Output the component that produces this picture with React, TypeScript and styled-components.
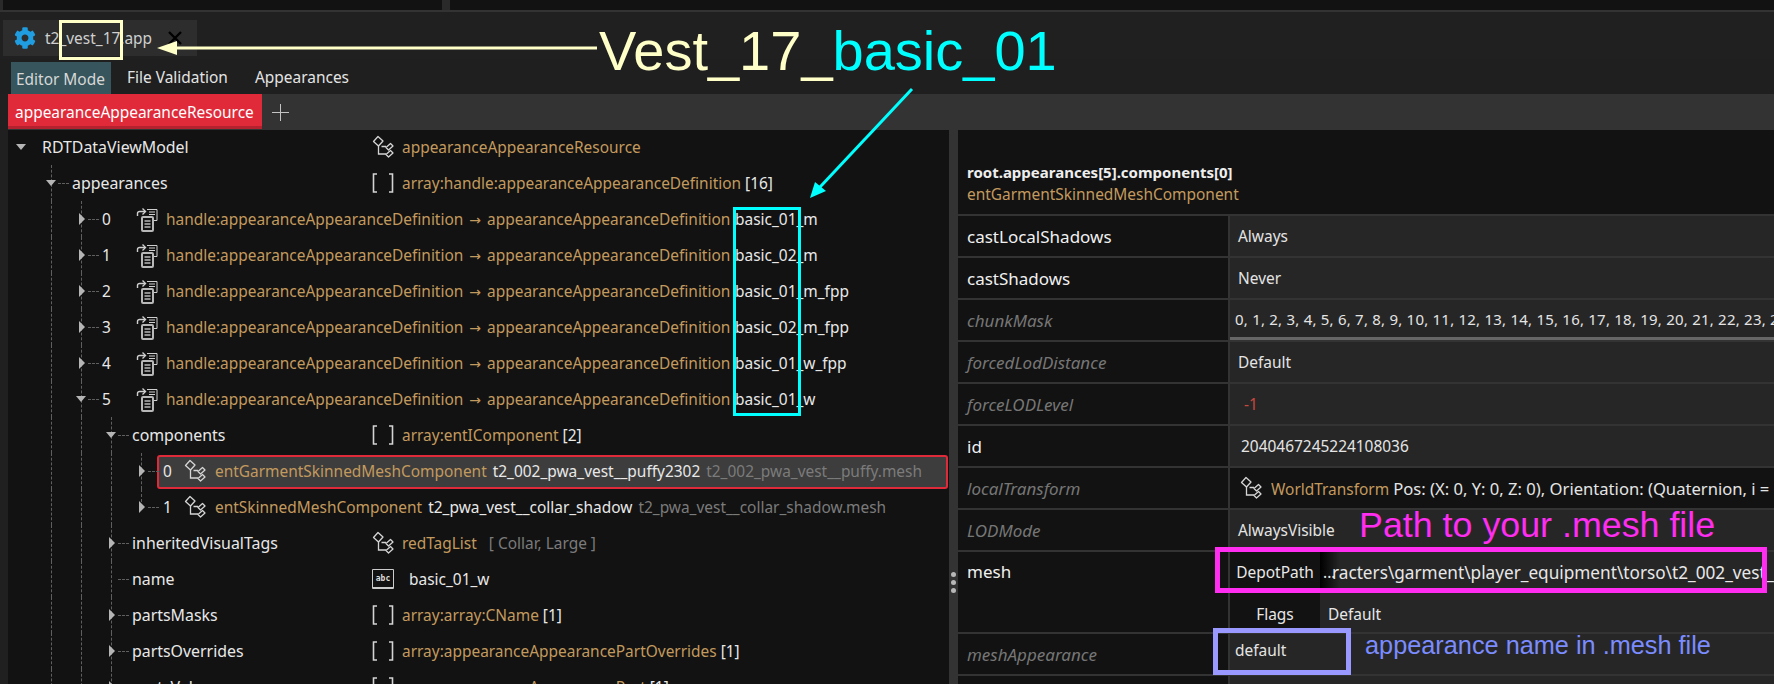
import React from 'react';
import styled, { createGlobalStyle } from 'styled-components';
import { FaCog } from 'react-icons/fa';

const GlobalStyle = createGlobalStyle`
  html, body {
    margin: 0;
    background: #202020;
    overflow: hidden;
  }
  * {
    box-sizing: border-box;
  }
`;

const ORANGE = '#c39a5e';
const YELLOW = '#ffffc8';
const CYAN = '#00ffff';
const PINK = '#ff2df0';
const LAVENDER = '#9999ff';

const Page = styled.div`
  position: relative;
  width: 1774px;
  height: 684px;
  overflow: hidden;
  background: #202020;
  color: #e8e8e8;
  font-family: 'Noto Sans', 'Open Sans', sans-serif;
  font-size: 15.45px;
  white-space: nowrap;
`;

const TopStrip = styled.div`
  display: flex;
  gap: 8px;
  height: 12px;
  padding-left: 3px;
  border-bottom: 2px solid #333;
  background: #2a2a2a;
`;

const TopPane = styled.div<{ $width?: number }>`
  background: #121212;
  flex: ${(p) => (p.$width ? `0 0 ${p.$width}px` : '1')};
`;

const TabBar = styled.div`
  height: 47px;
  padding: 8px 0 3px 3px;
`;

const FileTab = styled.div`
  display: flex;
  align-items: center;
  width: 194px;
  height: 36px;
  padding-left: 11px;
  background: #2d2d2d;
  color: #cfcfcf;
  svg.gear {
    color: #1f9de0;
    flex: none;
  }
`;

const FileName = styled.span`
  margin-left: 9px;
  width: 118px;
`;

const NavBar = styled.div`
  display: flex;
  height: 35px;
  padding: 3px 0 0 11px;
  background: #1f1f1f;
`;

const NavItem = styled.div<{ $active?: boolean; $width: number }>`
  width: ${(p) => p.$width}px;
  padding: ${(p) => (p.$active ? '6px 0 0 5px' : '4px 0 0 16px')};
  background: ${(p) => (p.$active ? '#36555c' : 'transparent')};
  color: ${(p) => (p.$active ? '#d8d8d8' : '#e4e4e4')};
`;

const DocTabs = styled.div`
  display: flex;
  align-items: center;
  height: 36px;
  margin-left: 8px;
  background: #333;
`;

const RedTab = styled.div`
  width: 254px;
  height: 35px;
  align-self: flex-start;
  padding: 7px 0 0 7px;
  background: #e02a3a;
  border-bottom: 3px solid #b3222e;
  color: #fff;
`;

const PlusIcon = styled.svg`
  margin-left: 10px;
  flex: none;
`;

const Main = styled.div`
  display: flex;
  height: 554px;
  padding-left: 8px;
`;

const TreePanel = styled.div`
  width: 941px;
  background: #121212;
  overflow: hidden;
`;

const TreeBody = styled.div`
  margin-top: -1px;
`;

const TreeRowBox = styled.div`
  display: flex;
  align-items: center;
  height: 36px;
  padding-left: 13px;
`;

const GuideCell = styled.div<{ $line?: boolean }>`
  flex: none;
  width: 30px;
  height: 100%;
  border-left: 1px dashed ${(p) => (p.$line ? '#5f5f5f' : 'transparent')};
`;

const Expander = styled.div<{ $line?: boolean; $halfLine?: boolean; $width: number }>`
  position: relative;
  flex: none;
  width: ${(p) => p.$width}px;
  height: 100%;
  &::before {
    content: '';
    position: absolute;
    left: 0;
    top: 0;
    height: ${(p) => (p.$halfLine ? '50%' : '100%')};
    border-left: 1px dashed ${(p) => (p.$line || p.$halfLine ? '#5f5f5f' : 'transparent')};
  }
  &::after {
    content: '';
    position: absolute;
    left: 7px;
    top: 18px;
    width: 11px;
    border-top: 1px dashed ${(p) => (p.$line || p.$halfLine ? '#5f5f5f' : 'transparent')};
  }
`;

const Triangle = styled.span<{ $open?: boolean }>`
  position: absolute;
  z-index: 1;
  width: 0;
  height: 0;
  ${(p) =>
    p.$open
      ? `left: -5px; top: 15px;
         border-left: 5px solid transparent;
         border-right: 5px solid transparent;
         border-top: 6px solid #b5b5b5;`
      : `left: -2px; top: 12px;
         border-top: 6px solid transparent;
         border-bottom: 6px solid transparent;
         border-left: 6px solid #b5b5b5;`}
`;

const KeyLabel = styled.div<{ $depth: number }>`
  flex: none;
  width: ${(p) => 330 - 30 * p.$depth}px;
  color: #e8e8e8;
  font-size: 15.9px;
`;

const IndexLabel = styled.div<{ $width: number }>`
  flex: none;
  width: ${(p) => p.$width}px;
  color: #e8e8e8;
`;

const IconSlot = styled.div<{ $width?: number }>`
  display: flex;
  align-items: center;
  flex: none;
  width: ${(p) => p.$width ?? 30}px;
`;

const Orange = styled.span`
  color: ${ORANGE};
`;

const Muted = styled.span`
  color: #7b7b7b;
`;

const Plain = styled.span`
  color: #e8e8e8;
`;

const HandleText = styled.div`
  flex: none;
  width: 569px;
  color: ${ORANGE};
`;

const ArrowGlyph = styled.span`
  margin: 0 2px;
  font-family: 'DejaVu Sans', sans-serif;
  font-size: 14px;
`;

const SelectedBox = styled.div`
  display: flex;
  align-items: center;
  flex: 1;
  height: 34px;
  margin: 2px 1px 0 0;
  padding-left: 4px;
  border: 2px solid #e02a3a;
  border-radius: 3px;
  background: #3d3d3d;
`;

const SelectedInner = styled.div`
  display: flex;
  align-items: center;
  margin-top: -2px;
`;

const ComponentText = styled.div`
  display: flex;
  gap: 6px;
`;

const TagList = styled.span`
  margin-left: 12px;
  color: #7b7b7b;
`;

const NameValue = styled.span`
  margin-left: 7px;
`;

const AbcIcon = styled.span`
  display: flex;
  align-items: center;
  justify-content: center;
  width: 22px;
  height: 20px;
  border: 1px solid #ccc;
  border-bottom-width: 2px;
  border-radius: 1px;
  color: #ddd;
  font-family: 'DejaVu Sans Mono', monospace;
  font-size: 8px;
  font-weight: 700;
`;

const Splitter = styled.div`
  display: flex;
  flex-direction: column;
  align-items: center;
  justify-content: flex-end;
  gap: 3px;
  flex: none;
  width: 9px;
  height: 463px;
  background: #333;
`;

const SplitterColumn = styled.div`
  flex: none;
  width: 9px;
  background: #333;
`;

const SplitDot = styled.span`
  width: 5px;
  height: 5px;
  border-radius: 50%;
  background: #b8b8b8;
`;

const PropsPanel = styled.div`
  flex: 1;
  min-width: 0;
  background: #121212;
  overflow: hidden;
`;

const PropsHeader = styled.div`
  height: 86px;
  padding: 31px 0 0 9px;
  border-bottom: 2px solid #333;
  line-height: 22px;
`;

const HeaderPath = styled.div`
  color: #eee;
  font-weight: 700;
  font-size: 15px;
`;

const HeaderType = styled.div`
  color: ${ORANGE};
`;

const PropRow = styled.div<{ $tall?: boolean }>`
  display: flex;
  height: ${(p) => (p.$tall ? 82 : 42)}px;
  border-bottom: 2px solid #333;
`;

const PropKey = styled.div<{ $dim?: boolean; $top?: boolean }>`
  display: flex;
  align-items: ${(p) => (p.$top ? 'flex-start' : 'center')};
  flex: none;
  width: 272px;
  padding: ${(p) => (p.$top ? '8px 0 0 9px' : '0 0 0 9px')};
  border-right: 2px solid #333;
  color: ${(p) => (p.$dim ? '#767676' : '#f0f0f0')};
  font-size: 17px;
  font-style: ${(p) => (p.$dim ? 'italic' : 'normal')};
`;

const PropValue = styled.div<{ $dark?: boolean; $pad?: number }>`
  display: flex;
  align-items: center;
  flex: 1;
  min-width: 0;
  padding-left: ${(p) => p.$pad ?? 8}px;
  background: ${(p) => (p.$dark ? '#121212' : '#262626')};
  color: #e4e4e4;
  overflow: hidden;
`;

const ChunkValue = styled(PropValue)`
  border-bottom: 3px solid #666;
  font-size: 15px;
  letter-spacing: 0.22px;
`;

const RaisedValue = styled(PropValue)`
  padding-bottom: 8px;
`;

const NegativeValue = styled.span`
  color: #c9473e;
`;

const TransformText = styled.div`
  margin-left: 9px;
`;

const TransformDetail = styled.span`
  font-size: 16.6px;
`;

const MeshValue = styled.div`
  flex: 1;
  min-width: 0;
  background: #262626;
  overflow: hidden;
`;

const MeshLine = styled.div`
  display: flex;
  align-items: center;
  height: 40px;
`;

const MeshLabel = styled.div<{ $low?: boolean }>`
  flex: none;
  width: 90px;
  height: 100%;
  line-height: ${(p) => (p.$low ? 44 : 40)}px;
  text-align: center;
  background: #121212;
`;

const FadeCell = styled.div`
  flex: none;
  width: 20px;
  height: 100%;
  line-height: 40px;
  padding-left: 3px;
  background: linear-gradient(90deg, #000, #262626);
`;

const PathText = styled.div`
  margin-left: -8px;
  font-size: 17.2px;
`;

const FlagsText = styled.div`
  margin-left: 8px;
  padding-top: 4px;
`;

const AnnotationBox = styled.div<{ $color: string; $weight: number }>`
  position: absolute;
  border: ${(p) => p.$weight}px solid ${(p) => p.$color};
  pointer-events: none;
`;

const YellowBox = styled(AnnotationBox)`
  left: 59px;
  top: 20px;
  width: 64px;
  height: 40px;
`;

const CyanBox = styled(AnnotationBox)`
  left: 733px;
  top: 207px;
  width: 68px;
  height: 209px;
`;

const PinkBox = styled(AnnotationBox)`
  left: 1215px;
  top: 547px;
  width: 552px;
  height: 46px;
`;

const LavenderBox = styled(AnnotationBox)`
  left: 1213px;
  top: 628px;
  width: 138px;
  height: 47px;
`;

const Callout = styled.div<{ $color: string; $size: number }>`
  position: absolute;
  color: ${(p) => p.$color};
  font-family: 'Liberation Sans', Arial, sans-serif;
  font-size: ${(p) => p.$size}px;
  line-height: 1;
`;

const VestCallout = styled(Callout)`
  left: 599px;
  top: 23px;
`;

const PathCallout = styled(Callout)`
  left: 1359px;
  top: 508px;
`;

const AppearanceCallout = styled(Callout)`
  left: 1365px;
  top: 633px;
`;

const CyanText = styled.span`
  color: ${CYAN};
`;

const ArrowSvg = styled.svg`
  position: absolute;
  left: 0;
  top: 0;
  pointer-events: none;
`;

const IconSvg = styled.svg`
  flex: none;
`;

function HandleIcon() {
  return (
    <IconSvg width="22" height="25" viewBox="0 0 22 25" fill="none" stroke="#cfcfcf">
      <path d="M1.5 9V6.5a2 2 0 0 1 2-2H9" strokeWidth="1.4" />
      <path d="M6.5 1.5l3 3-3 3" strokeWidth="1.4" />
      <path d="M11 2.5h10v11h-3M13 5h6M13 7.5h6" strokeWidth="1" />
      <rect x="6" y="10" width="11" height="14" rx="1" strokeWidth="2" stroke="#b8b8b8" />
      <path d="M8.5 14h6M8.5 17h6M8.5 20h6" strokeWidth="1.4" stroke="#b8b8b8" />
    </IconSvg>
  );
}

function ClassIcon() {
  return (
    <IconSvg width="22" height="24" viewBox="0 0 22 24" fill="none" stroke="#d4d4d4" strokeWidth="1.3">
      <path d="M1.5 6.5l4.5-5 5 4.5-4.5 5z" strokeLinejoin="round" />
      <path d="M14 12.5l4.5-4 2.5 2.5-4.5 4z" strokeLinejoin="round" />
      <path d="M14 19.5l4.5-4 2.5 2.5-4.5 4z" strokeLinejoin="round" />
      <path d="M6.5 11v8H14M9.5 11.5H14" />
    </IconSvg>
  );
}

function BracketIcon() {
  return (
    <IconSvg width="22" height="20" viewBox="0 0 22 20" fill="none" stroke="#d4d4d4" strokeWidth="1.6">
      <path d="M5 1H1.5v18H5M17 1h3.5v18H17" />
    </IconSvg>
  );
}

const CloseSvg = styled(IconSvg)`
  margin-left: 5px;
`;

function CloseIcon() {
  return (
    <CloseSvg width="14" height="14" viewBox="0 0 14 14" stroke="#000" strokeWidth="2.4">
      <path d="M1 1l12 12M13 1L1 13" />
    </CloseSvg>
  );
}

type KeyRow = {
  depth: number;
  label: string;
  open?: boolean;
  noTriangle?: boolean;
  icon: 'class' | 'bracket' | 'abc';
  value: React.ReactNode;
};

const handleNames = ['basic_01_m', 'basic_02_m', 'basic_01_m_fpp', 'basic_02_m_fpp', 'basic_01_w_fpp', 'basic_01_w'];

const lowerRows: KeyRow[] = [
  {
    depth: 3,
    label: 'inheritedVisualTags',
    icon: 'class',
    value: (
      <>
        <Orange>redTagList</Orange>
        <TagList>[ Collar, Large ]</TagList>
      </>
    ),
  },
  { depth: 3, label: 'name', noTriangle: true, icon: 'abc', value: <NameValue>basic_01_w</NameValue> },
  {
    depth: 3,
    label: 'partsMasks',
    icon: 'bracket',
    value: (
      <>
        <Orange>array:array:CName</Orange> <Plain>[1]</Plain>
      </>
    ),
  },
  {
    depth: 3,
    label: 'partsOverrides',
    icon: 'bracket',
    value: (
      <>
        <Orange>array:appearanceAppearancePartOverrides</Orange> <Plain>[1]</Plain>
      </>
    ),
  },
  {
    depth: 3,
    label: 'partsValues',
    icon: 'bracket',
    value: (
      <>
        <Orange>array:appearanceAppearancePart</Orange> <Plain>[1]</Plain>
      </>
    ),
  },
];

function Guides({ depth }: { depth: number }) {
  return (
    <>
      {Array.from({ length: depth }, (_, i) => (
        <GuideCell key={i} $line={i > 0} />
      ))}
    </>
  );
}

function RowIcon({ icon }: { icon: KeyRow['icon'] }) {
  if (icon === 'class') return <ClassIcon />;
  if (icon === 'abc') return <AbcIcon>abc</AbcIcon>;
  return <BracketIcon />;
}

function KeyTreeRow({ depth, label, open, noTriangle, icon, value }: KeyRow) {
  return (
    <TreeRowBox>
      <Guides depth={depth} />
      <Expander $width={21} $line={depth > 0}>
        {!noTriangle && <Triangle $open={open} />}
      </Expander>
      <KeyLabel $depth={depth}>{label}</KeyLabel>
      <IconSlot>
        <RowIcon icon={icon} />
      </IconSlot>
      <div>{value}</div>
    </TreeRowBox>
  );
}

function ComponentRow({ index, type, name, mesh, selected }: { index: number; type: string; name: string; mesh: string; selected?: boolean }) {
  const body = (
    <>
      <IndexLabel $width={21}>{index}</IndexLabel>
      <IconSlot $width={31}>
        <ClassIcon />
      </IconSlot>
      <ComponentText>
        <Orange>{type}</Orange>
        <Plain>{name}</Plain>
        <Muted>{mesh}</Muted>
      </ComponentText>
    </>
  );
  return (
    <TreeRowBox>
      <Guides depth={4} />
      {selected ? (
        <>
          <Expander $width={16} $line>
            <Triangle />
          </Expander>
          <SelectedBox>
            <SelectedInner>{body}</SelectedInner>
          </SelectedBox>
        </>
      ) : (
        <>
          <Expander $width={22} $halfLine>
            <Triangle />
          </Expander>
          {body}
        </>
      )}
    </TreeRowBox>
  );
}

function Tree() {
  return (
    <TreePanel>
      <TreeBody>
        <KeyTreeRow
          depth={0}
          label="RDTDataViewModel"
          open
          icon="class"
          value={<Orange>appearanceAppearanceResource</Orange>}
        />
        <KeyTreeRow
          depth={1}
          label="appearances"
          open
          icon="bracket"
          value={
            <>
              <Orange>array:handle:appearanceAppearanceDefinition</Orange> <Plain>[16]</Plain>
            </>
          }
        />
        {handleNames.map((name, i) => (
          <TreeRowBox key={i}>
            <Guides depth={2} />
            <Expander $width={21} $line>
              <Triangle $open={i === 5} />
            </Expander>
            <IndexLabel $width={34}>{i}</IndexLabel>
            <IconSlot $width={30}>
              <HandleIcon />
            </IconSlot>
            <HandleText>
              handle:appearanceAppearanceDefinition <ArrowGlyph>→</ArrowGlyph> appearanceAppearanceDefinition
            </HandleText>
            <Plain>{name}</Plain>
          </TreeRowBox>
        ))}
        <KeyTreeRow
          depth={3}
          label="components"
          open
          icon="bracket"
          value={
            <>
              <Orange>array:entIComponent</Orange> <Plain>[2]</Plain>
            </>
          }
        />
        <ComponentRow
          index={0}
          selected
          type="entGarmentSkinnedMeshComponent"
          name="t2_002_pwa_vest__puffy2302"
          mesh="t2_002_pwa_vest__puffy.mesh"
        />
        <ComponentRow
          index={1}
          type="entSkinnedMeshComponent"
          name="t2_pwa_vest__collar_shadow"
          mesh="t2_pwa_vest__collar_shadow.mesh"
        />
        {lowerRows.map((row) => (
          <KeyTreeRow key={row.label} {...row} />
        ))}
      </TreeBody>
    </TreePanel>
  );
}

const chunkText = Array.from({ length: 32 }, (_, i) => i).join(', ');

function Properties() {
  return (
    <PropsPanel>
      <PropsHeader>
        <HeaderPath>root.appearances[5].components[0]</HeaderPath>
        <HeaderType>entGarmentSkinnedMeshComponent</HeaderType>
      </PropsHeader>
      <PropRow>
        <PropKey>castLocalShadows</PropKey>
        <PropValue>Always</PropValue>
      </PropRow>
      <PropRow>
        <PropKey>castShadows</PropKey>
        <PropValue>Never</PropValue>
      </PropRow>
      <PropRow>
        <PropKey $dim>chunkMask</PropKey>
        <ChunkValue $pad={5}>{chunkText}</ChunkValue>
      </PropRow>
      <PropRow>
        <PropKey $dim>forcedLodDistance</PropKey>
        <PropValue>Default</PropValue>
      </PropRow>
      <PropRow>
        <PropKey $dim>forceLODLevel</PropKey>
        <PropValue $pad={14}>
          <NegativeValue>-1</NegativeValue>
        </PropValue>
      </PropRow>
      <PropRow>
        <PropKey>id</PropKey>
        <PropValue $pad={11}>2040467245224108036</PropValue>
      </PropRow>
      <PropRow>
        <PropKey $dim>localTransform</PropKey>
        <PropValue $dark $pad={10}>
          <ClassIcon />
          <TransformText>
            <Orange>WorldTransform</Orange>{' '}
            <TransformDetail>Pos: (X: 0, Y: 0, Z: 0), Orientation: (Quaternion, i = 0, j = 0, k = 0, r = 1)</TransformDetail>
          </TransformText>
        </PropValue>
      </PropRow>
      <PropRow>
        <PropKey $dim>LODMode</PropKey>
        <PropValue>AlwaysVisible</PropValue>
      </PropRow>
      <PropRow $tall>
        <PropKey $top>mesh</PropKey>
        <MeshValue>
          <MeshLine>
            <MeshLabel>DepotPath</MeshLabel>
            <FadeCell>...</FadeCell>
            <PathText>racters\garment\player_equipment\torso\t2_002_vest__puffy\t2_002_pwa_vest__puffy.mesh</PathText>
          </MeshLine>
          <MeshLine>
            <MeshLabel $low>Flags</MeshLabel>
            <FlagsText>Default</FlagsText>
          </MeshLine>
        </MeshValue>
      </PropRow>
      <PropRow>
        <PropKey $dim>meshAppearance</PropKey>
        <RaisedValue $pad={5}>default</RaisedValue>
      </PropRow>
      <PropRow>
        <PropKey />
        <PropValue />
      </PropRow>
    </PropsPanel>
  );
}

export default function App() {
  return (
    <Page>
      <GlobalStyle />
      <TopStrip>
        <TopPane $width={439} />
        <TopPane />
      </TopStrip>
      <TabBar>
        <FileTab>
          <FaCog className="gear" size={22} />
          <FileName>t2_vest_17.app</FileName>
          <CloseIcon />
        </FileTab>
      </TabBar>
      <NavBar>
        <NavItem $active $width={100}>
          Editor Mode
        </NavItem>
        <NavItem $width={128}>File Validation</NavItem>
        <NavItem $width={130}>Appearances</NavItem>
      </NavBar>
      <DocTabs>
        <RedTab>appearanceAppearanceResource</RedTab>
        <PlusIcon width="17" height="17" viewBox="0 0 17 17" stroke="#c4c4c4">
          <path d="M8.5 0v17M0 8.5h17" />
        </PlusIcon>
      </DocTabs>
      <Main>
        <Tree />
        <SplitterColumn>
          <Splitter>
            <SplitDot />
            <SplitDot />
            <SplitDot />
          </Splitter>
        </SplitterColumn>
        <Properties />
      </Main>

      <YellowBox $color={YELLOW} $weight={3} />
      <CyanBox $color={CYAN} $weight={3} />
      <PinkBox $color={PINK} $weight={5} />
      <LavenderBox $color={LAVENDER} $weight={5} />
      <VestCallout $color={YELLOW} $size={56}>
        Vest_17_<CyanText>basic_01</CyanText>
      </VestCallout>
      <PathCallout $color={PINK} $size={35.8}>
        Path to your .mesh file
      </PathCallout>
      <AppearanceCallout $color="#7b8cff" $size={25.3}>
        appearance name in .mesh file
      </AppearanceCallout>
      <ArrowSvg width="1774" height="684" viewBox="0 0 1774 684" fill="none">
        <path d="M174 48H597" stroke={YELLOW} strokeWidth="3" />
        <path d="M157 48l20-7v14z" fill={YELLOW} />
        <path d="M912 89L820 187" stroke={CYAN} strokeWidth="3" />
        <path d="M810 198l5-16 11 9z" fill={CYAN} />
      </ArrowSvg>
    </Page>
  );
}
